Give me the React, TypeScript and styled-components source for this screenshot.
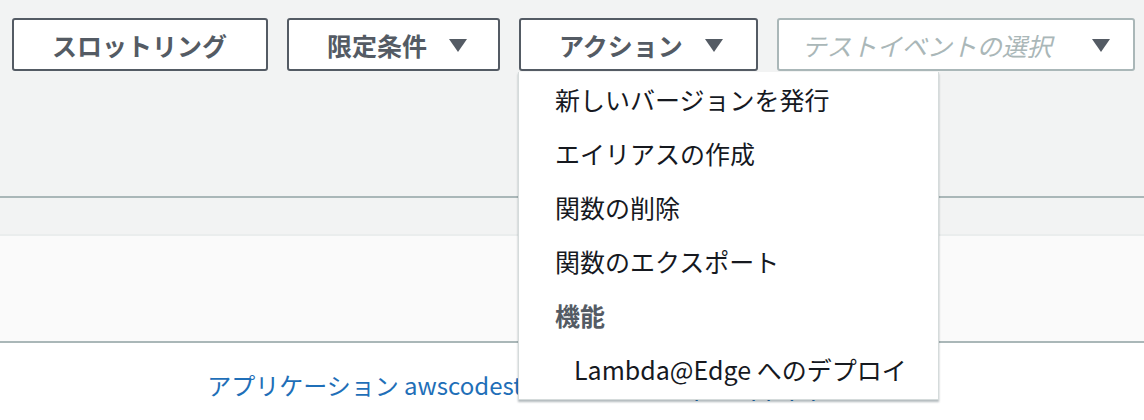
import styled, { createGlobalStyle } from "styled-components";

const GlobalStyle = createGlobalStyle`
  body {
    margin: 0;
    background: #ffffff;
    font-family: "Noto Sans CJK JP", "Noto Sans", sans-serif;
  }
`;

const Page = styled.div`
  width: 1144px;
  height: 420px;
  overflow: hidden;
  display: flex;
  flex-direction: column;
`;

const Toolbar = styled.div`
  height: 178px;
  padding: 18px 12px 0;
  background: #f2f3f3;
  border-bottom: 2px solid #aab7b8;
  display: flex;
  align-items: flex-start;
  gap: 19px;
`;

const Strip = styled.div`
  height: 36px;
  background: #f2f3f3;
`;

const Panel = styled.div`
  height: 105px;
  background: #fafafa;
  border-top: 2px solid #eaeded;
  border-bottom: 2px solid #aab7b8;
`;

const Footer = styled.div`
  flex: 1;
  display: flex;
  justify-content: center;
  padding-top: 24px;
`;

const Link = styled.a`
  font-size: 24px;
  color: #1f6fb8;
  text-decoration: none;
  white-space: nowrap;
`;

const Button = styled.button<{ $left?: number; $right?: number }>`
  box-sizing: border-box;
  flex-shrink: 0;
  height: 53px;
  padding: 0 ${(p) => p.$right ?? 38}px 0 ${(p) => p.$left ?? 38}px;
  background: #ffffff;
  border: 2px solid #545b64;
  border-radius: 3px;
  display: flex;
  align-items: center;
  gap: 22px;
  font-family: inherit;
  font-size: 25px;
  font-weight: 700;
  color: #545b64;
  white-space: nowrap;
  cursor: pointer;
`;

const Arrow = styled.span<{ $color?: string }>`
  flex-shrink: 0;
  width: 0;
  height: 0;
  border-left: 9px solid transparent;
  border-right: 9px solid transparent;
  border-top: 13px solid ${(p) => p.$color ?? "#545b64"};
  margin-top: 2px;
`;

const MenuAnchor = styled.div`
  position: relative;
  flex-shrink: 0;
`;

const Menu = styled.ul`
  position: absolute;
  top: 54px;
  left: -1px;
  width: 421px;
  box-sizing: border-box;
  margin: 0;
  padding: 0 0 3px;
  list-style: none;
  background: #ffffff;
  border: 1px solid #d5dbdb;
  border-top: none;
  box-shadow: 0 2px 2px rgba(0, 28, 36, 0.3);
  z-index: 5;
`;

const MenuItem = styled.li<{ $indent?: boolean; $header?: boolean }>`
  height: 54px;
  display: flex;
  align-items: center;
  padding-left: ${(p) => (p.$indent ? 55 : 36)}px;
  font-size: 25px;
  font-weight: ${(p) => (p.$header ? 700 : 400)};
  color: ${(p) => (p.$header ? "#545b64" : "#16191f")};
  white-space: nowrap;
`;

const Select = styled.div`
  box-sizing: border-box;
  flex-shrink: 0;
  width: 358px;
  height: 53px;
  padding: 0 23px 0 23px;
  background: #ffffff;
  border: 2px solid #aab7b8;
  border-radius: 3px;
  display: flex;
  align-items: center;
  justify-content: space-between;
`;

const Placeholder = styled.span`
  font-size: 25px;
  font-style: italic;
  color: #aab7b8;
  white-space: nowrap;
`;

const menuItems = [
  { label: "新しいバージョンを発行" },
  { label: "エイリアスの作成" },
  { label: "関数の削除" },
  { label: "関数のエクスポート" },
  { label: "機能", header: true },
  { label: "Lambda@Edge へのデプロイ", indent: true },
];

export default function App() {
  return (
    <Page>
      <GlobalStyle />
      <Toolbar>
        <Button $left={38} $right={39}>
          スロットリング
        </Button>
        <Button $right={31}>
          限定条件 <Arrow />
        </Button>
        <MenuAnchor>
          <Button $right={33}>
            アクション <Arrow />
          </Button>
          <Menu>
            {menuItems.map((item, index) => (
              <MenuItem key={index} $header={item.header} $indent={item.indent}>
                {item.label}
              </MenuItem>
            ))}
          </Menu>
        </MenuAnchor>
        <Select>
          <Placeholder>テストイベントの選択</Placeholder>
          <Arrow />
        </Select>
      </Toolbar>
      <Strip />
      <Panel />
      <Footer>
        <Link href="#">
          アプリケーション awscodestar-lambda-sample-app-pipeline-conf
        </Link>
      </Footer>
    </Page>
  );
}
